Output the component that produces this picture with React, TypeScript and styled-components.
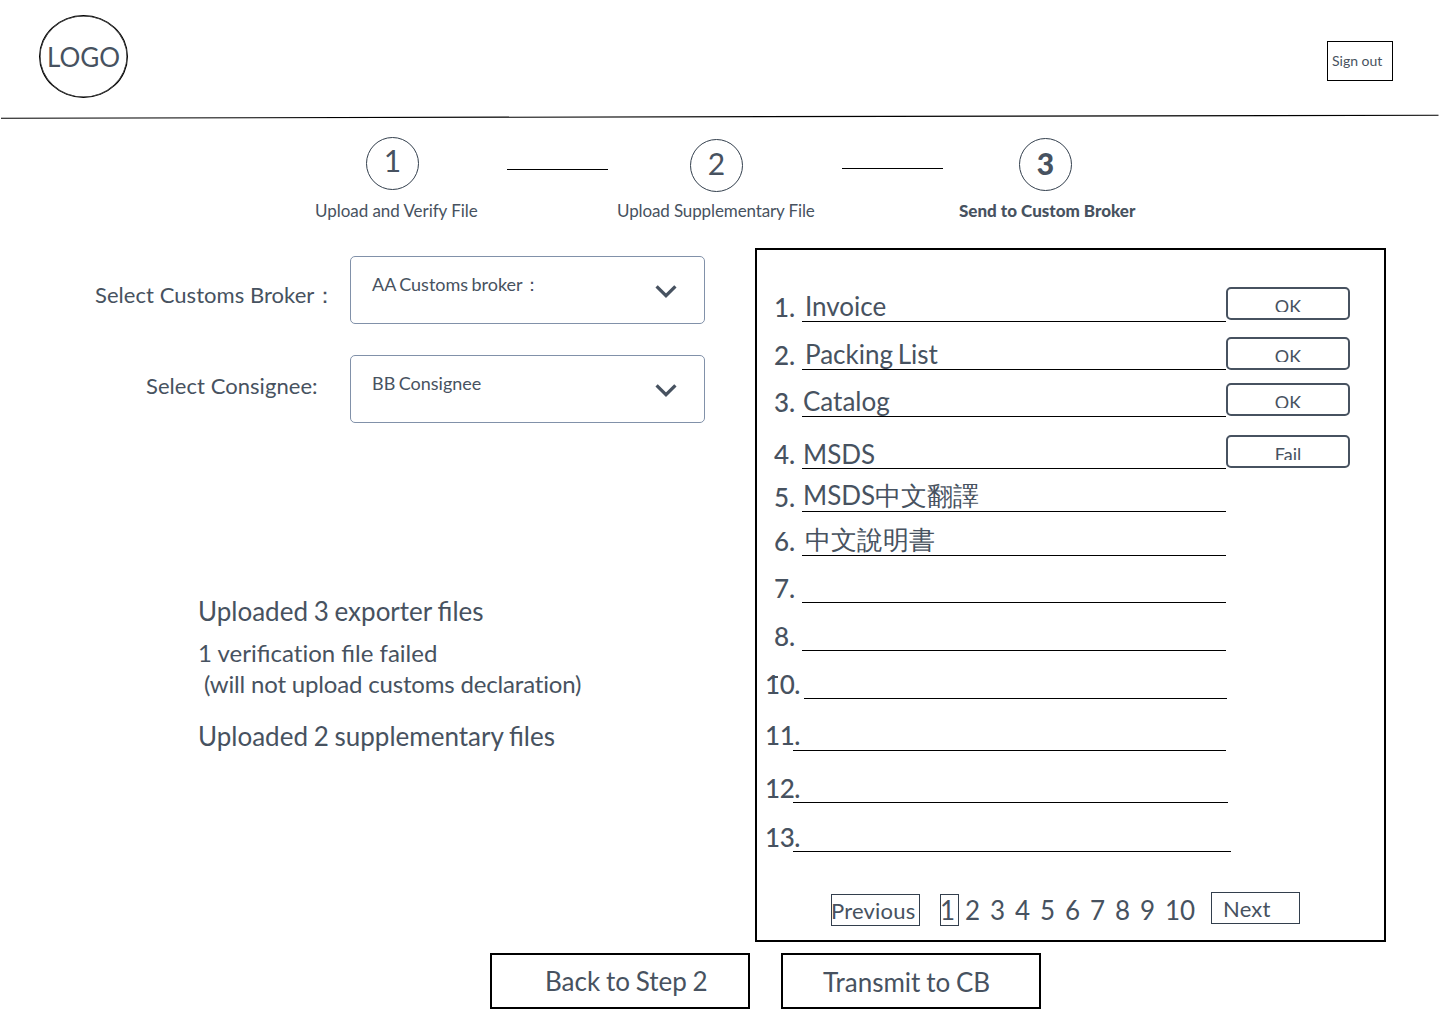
import React from "react";
import styled, { createGlobalStyle } from "styled-components";

const ink = "#475260";

const GlobalStyle = createGlobalStyle`
  * { box-sizing: border-box; }
  body {
    margin: 0;
    background: #fff;
    color: ${ink};
    font-family: Lato, "DejaVu Sans", sans-serif;
  }
  button { font-family: inherit; color: inherit; background: none; margin: 0; text-align: left; }
`;

const Page = styled.div`
  width: 1440px;
  height: 1024px;
  overflow: hidden;
  display: flex;
  flex-direction: column;
`;

const Header = styled.header`
  height: 114px;
  flex: none;
  display: flex;
  justify-content: space-between;
  align-items: flex-start;
  padding: 15px 47px 0 39px;
`;

const Logo = styled.div`
  width: 89px;
  height: 83px;
  border: 1px solid #000;
  box-shadow: inset 0 0 0 0.5px #000;
  border-radius: 50%;
  padding: 25px 0 0 7px;
  font-size: 26px;
  line-height: 32px;
`;

const SignOut = styled.button`
  width: 66px;
  height: 40px;
  margin-top: 26px;
  padding: 0 0 2px 4px;
  border: 1px solid #000;
  font-size: 14px;
  line-height: 17px;
`;

const HeaderRule = styled.svg`
  display: block;
  flex: none;
  width: 1440px;
  height: 6px;
`;

const Steps = styled.nav`
  height: 128px;
  flex: none;
  display: flex;
  align-items: flex-start;
  padding: 17px 0 0 314px;
`;

const Step = styled.div<{ $width: number; $active?: boolean }>`
  width: ${(p) => p.$width}px;
  height: 84px;
  display: flex;
  flex-direction: column;
  justify-content: space-between;
  font-size: 17px;
  line-height: 21px;
  white-space: nowrap;
  font-weight: ${(p) => (p.$active ? 900 : 400)};
`;

const StepLabel = styled.span<{ $indent?: number; $tracking?: number }>`
  padding-left: ${(p) => p.$indent ?? 0}px;
  letter-spacing: ${(p) => p.$tracking ?? 0}px;
`;

const StepCircle = styled.div<{ $left: number; $top: number; $pad: number }>`
  width: 53px;
  height: 53px;
  margin: ${(p) => p.$top}px 0 0 ${(p) => p.$left}px;
  padding-top: ${(p) => p.$pad}px;
  border: 1px solid #333f4d;
  border-radius: 50%;
  font-size: 30px;
  line-height: 36px;
  text-align: center;
`;

const Connector = styled.div<{ $top: number; $left: number; $right: number }>`
  width: 101px;
  height: 1px;
  background: #000;
  margin: ${(p) => p.$top}px ${(p) => p.$right}px 0 ${(p) => p.$left}px;
`;

const Main = styled.main`
  height: 694px;
  flex: none;
  display: flex;
`;

const Sidebar = styled.section`
  width: 755px;
  flex: none;
  padding-top: 8px;
`;

const Field = styled.div`
  display: flex;
  height: 68px;
  margin-bottom: 31px;
`;

const FieldLabel = styled.label<{ $left: number; $top: number }>`
  width: 350px;
  flex: none;
  padding: ${(p) => p.$top}px 0 0 ${(p) => p.$left}px;
  font-size: 22px;
  line-height: 27px;
  letter-spacing: 0.05px;
  white-space: nowrap;
`;

const Select = styled.div`
  width: 355px;
  height: 68px;
  display: flex;
  justify-content: space-between;
  align-items: flex-start;
  padding: 16px 26px 0 21px;
  border: 1px solid #8191a9;
  border-radius: 5px;
  font-size: 18px;
  line-height: 22px;
  word-spacing: -1.2px;
`;

const Chevron = styled.svg`
  width: 24px;
  height: 16px;
  margin-top: 10px;
`;

const Summary = styled.div`
  padding: 141px 0 0 198px;
`;

const Total = styled.p`
  margin: 0;
  font-size: 26px;
  line-height: 32px;
  word-spacing: -0.9px;
`;

const Failure = styled.div`
  margin: 10px 0 21px;
  font-size: 24px;
  line-height: 31px;
  white-space: pre;
`;

const FailureLine = styled.div<{ $tracking?: number }>`
  letter-spacing: ${(p) => p.$tracking ?? 0}px;
`;

const Unligated = styled.span`
  font-variant-ligatures: none;
`;

const Panel = styled.section`
  width: 631px;
  height: 694px;
  border: 2px solid #000;
`;

const FileRow = styled.div<{ $height: number }>`
  height: ${(p) => p.$height}px;
  display: flex;
  align-items: flex-end;
`;

const FileNumber = styled.div<{ $width: number; $wide: boolean; $lift: number }>`
  width: ${(p) => p.$width}px;
  flex: none;
  padding-left: ${(p) => (p.$wide ? 8 : 17)}px;
  margin-bottom: ${(p) => p.$lift}px;
  font-size: 26px;
  font-weight: 500;
  line-height: 32px;
  letter-spacing: ${(p) => (p.$wide ? -0.4 : 0)}px;
  white-space: nowrap;
`;

const Overprint = styled.span`
  position: relative;
  &::after {
    content: "";
    position: absolute;
    left: 8px;
    top: 8px;
    width: 5px;
    height: 2px;
    background: ${ink};
  }
`;

const FileLine = styled.div<{ $width: number; $indent: number; $lift: number }>`
  width: ${(p) => p.$width}px;
  height: 40px;
  flex: none;
  display: flex;
  align-items: flex-end;
  border-bottom: 1px solid #000;
  padding: 0 0 ${(p) => p.$lift}px ${(p) => p.$indent}px;
  font-size: 26px;
  line-height: 28px;
  word-spacing: -2px;
  white-space: nowrap;
`;

const Status = styled.div<{ $lift: number }>`
  width: 124px;
  height: 33px;
  margin-bottom: ${(p) => p.$lift}px;
  padding-top: 6px;
  border: 2px solid ${ink};
  border-radius: 5px;
`;

const StatusText = styled.div`
  height: 17px;
  overflow: hidden;
  font-size: 18px;
  line-height: 22px;
  text-align: center;
`;

const Pager = styled.div`
  display: flex;
  align-items: flex-start;
  padding: 40px 0 0 74px;
`;

const PagerButton = styled.button<{ $top: number; $left: number; $indent: number }>`
  width: 89px;
  height: 32px;
  margin-top: ${(p) => p.$top}px;
  margin-left: ${(p) => p.$left}px;
  padding: 0;
  text-indent: ${(p) => p.$indent}px;
  border: 1px solid #333f4d;
  font-size: 22px;
  line-height: 27px;
  letter-spacing: 0.2px;
  white-space: nowrap;
`;

const Pages = styled.div`
  display: flex;
  gap: 10px;
  margin: 2px 0 0 20px;
  font-size: 26px;
  line-height: 32px;
`;

const PageNumber = styled.span<{ $digits: number; $current: boolean }>`
  width: ${(p) => p.$digits * 15}px;
  height: 32px;
  ${(p) => p.$current && "width: 19px; margin-right: -4px; outline: 1px solid #333f4d; outline-offset: -1px;"}
`;

const Actions = styled.footer`
  display: flex;
  gap: 31px;
  padding: 11px 0 0 490px;
`;

const Action = styled.button<{ $left: number; $top: number }>`
  width: 260px;
  height: 56px;
  display: flex;
  align-items: flex-start;
  padding: ${(p) => p.$top}px 0 0 ${(p) => p.$left}px;
  border: 2px solid #000;
  font-size: 26px;
  line-height: 32px;
  word-spacing: -0.9px;
  white-space: nowrap;
`;

type FileItem = {
  no: string;
  name?: string;
  height: number;
  start: number;
  width: number;
  noLift: number;
  indent?: number;
  lift?: number;
  status?: string;
  statusLift?: number;
};

const files: FileItem[] = [
  { no: "1.", name: "Invoice", height: 72, start: 45, width: 424, noLift: -1, indent: 3, lift: 1, status: "OK", statusLift: 2 },
  { no: "2.", name: "Packing List", height: 48, start: 45, width: 424, noLift: -1, indent: 3, lift: 1, status: "OK", statusLift: 0 },
  { no: "3.", name: "Catalog", height: 47, start: 45, width: 424, noLift: -1, indent: 1, lift: 1, status: "OK", statusLift: 1 },
  { no: "4.", name: "MSDS", height: 52, start: 45, width: 424, noLift: -1, indent: 1, lift: 0, status: "Fail", statusLift: 1 },
  { no: "5.", name: "MSDS中文翻譯", height: 43, start: 45, width: 424, noLift: -1, indent: 1, lift: 2 },
  { no: "6.", name: "中文說明書", height: 44, start: 45, width: 424, noLift: -1, indent: 3, lift: 2 },
  { no: "7.", height: 47, start: 45, width: 424, noLift: -1 },
  { no: "8.", height: 48, start: 45, width: 424, noLift: -1 },
  { no: "10.", height: 48, start: 47, width: 423, noLift: -1 },
  { no: "11.", height: 52, start: 36, width: 433, noLift: 0 },
  { no: "12.", height: 52, start: 36, width: 435, noLift: -1 },
  { no: "13.", height: 49, start: 36, width: 438, noLift: -1 },
];

function ChevronIcon() {
  return (
    <Chevron viewBox="0 0 24 16">
      <path d="M2.6 3.4 L12 12.6 L21.4 3.4" fill="none" stroke={ink} strokeWidth="3.3" />
    </Chevron>
  );
}

export default function App() {
  return (
    <>
      <GlobalStyle />
      <Page>
        <Header>
          <Logo>LOGO</Logo>
          <SignOut>Sign out</SignOut>
        </Header>
        <HeaderRule viewBox="0 0 1440 6">
          <line x1="1" y1="4.2" x2="1438.5" y2="1.3" stroke="#000" strokeWidth="1.1" />
        </HeaderRule>

        <Steps>
          <Step $width={166}>
            <StepCircle $left={52} $top={0} $pad={4}>1</StepCircle>
            <StepLabel $indent={1} $tracking={-0.05}>Upload and Verify File</StepLabel>
          </Step>
          <Connector $top={32} $left={27} $right={8} />
          <Step $width={200}>
            <StepCircle $left={74} $top={2} $pad={5}>2</StepCircle>
            <StepLabel $indent={1} $tracking={-0.12}>Upload Supplementary File</StepLabel>
          </Step>
          <Connector $top={31} $left={26} $right={16} />
          <Step $width={180} $active>
            <StepCircle $left={60} $top={1} $pad={6}>3</StepCircle>
            <StepLabel>Send to Custom Broker</StepLabel>
          </Step>
        </Steps>

        <Main>
          <Sidebar>
            <Field>
              <FieldLabel $left={95} $top={25}>Select Customs Broker：</FieldLabel>
              <Select>AA Customs broker：<ChevronIcon /></Select>
            </Field>
            <Field>
              <FieldLabel $left={146} $top={17}>Select Consignee:</FieldLabel>
              <Select>BB Consignee<ChevronIcon /></Select>
            </Field>
            <Summary>
              <Total>Uploaded 3 exporter files</Total>
              <Failure>
                <FailureLine>1 verifica<Unligated>ti</Unligated>on file failed</FailureLine>
                <FailureLine $tracking={-0.17}>{" (will not upload customs declaration)"}</FailureLine>
              </Failure>
              <Total>Uploaded 2 supplementary files</Total>
            </Summary>
          </Sidebar>

          <Panel>
            {files.map((f) => (
              <FileRow key={f.no} $height={f.height}>
                <FileNumber $width={f.start} $wide={f.no.length > 2} $lift={f.noLift}>
                  {f.no === "10." ? <Overprint>{f.no}</Overprint> : f.no}
                </FileNumber>
                <FileLine $width={f.width} $indent={f.indent ?? 0} $lift={f.lift ?? 0}>
                  {f.name}
                </FileLine>
                {f.status && (
                  <Status $lift={f.statusLift ?? 0}>
                    <StatusText>{f.status}</StatusText>
                  </Status>
                )}
              </FileRow>
            ))}
            <Pager>
              <PagerButton $top={2} $left={0} $indent={-1}>Previous</PagerButton>
              <Pages>
                {["1", "2", "3", "4", "5", "6", "7", "8", "9", "10"].map((n) => (
                  <PageNumber key={n} $digits={n.length} $current={n === "1"}>{n}</PageNumber>
                ))}
              </Pages>
              <PagerButton $top={0} $left={16} $indent={11}>Next</PagerButton>
            </Pager>
          </Panel>
        </Main>

        <Actions>
          <Action $left={53} $top={10}>Back to Step 2</Action>
          <Action $left={40} $top={11}>Transmit to CB</Action>
        </Actions>
      </Page>
    </>
  );
}
